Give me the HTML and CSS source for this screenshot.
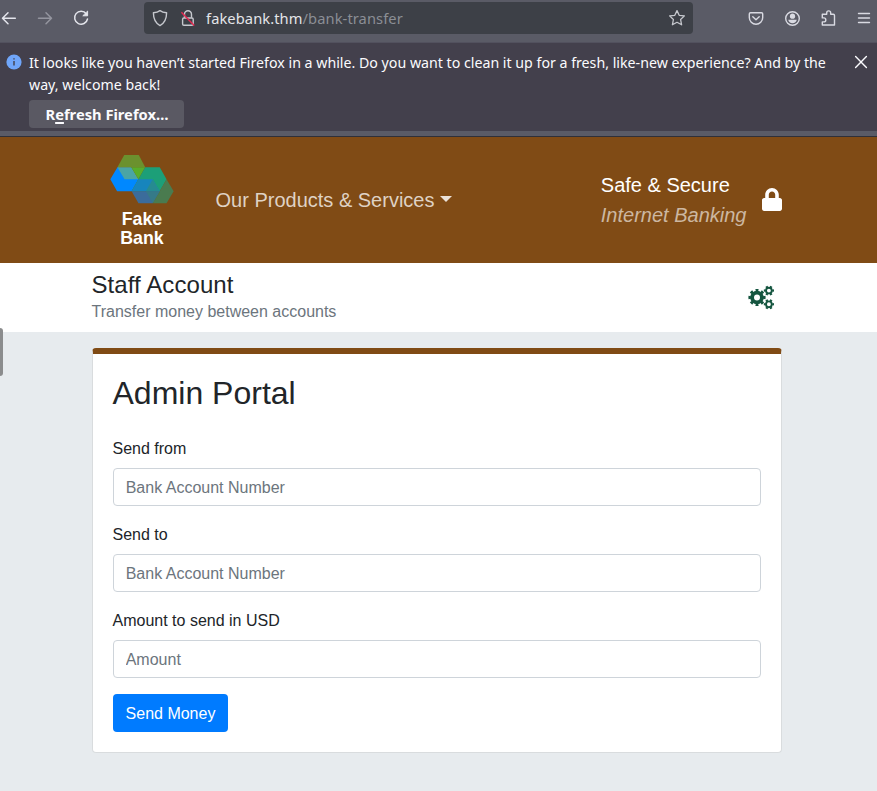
FILE: index.html
```html
<!DOCTYPE html>
<html lang="en">
<head>
<meta charset="utf-8">
<title>Fake Bank</title>
<link rel="stylesheet" href="styles.css">
</head>
<body>
<div class="toolbar">
  <svg class="nav-icons" width="94" height="36" fill="none" stroke="#e4e5ec" stroke-width="1.5" stroke-linecap="round" stroke-linejoin="round">
    <path d="M15.3 18.3H2.7M8 12.8L2.5 18.3L8 23.8"/>
    <path stroke="#94959f" d="M38.5 18.3H51M46 12.8L51.5 18.3L46 23.8"/>
    <path d="M86.3 13.8A6.5 6.5 0 1 0 87.5 19"/><path fill="#e4e5ec" stroke-width="1" d="M87.6 11.5V15.8H83.2Z"/>
  </svg>
  <div class="urlbar">
    <svg class="site-icons" width="54" height="32" fill="none" stroke="#c6c8ce" stroke-width="1.4" stroke-linejoin="round">
      <path d="M16 8.6C18 10.1 20.2 10.6 22.6 10.8C22.6 16.5 21.2 20.8 16 23.6C10.8 20.8 9.4 16.5 9.4 10.8C11.8 10.6 14 10.1 16 8.6Z"/>
      <rect x="38.6" y="16" width="10.6" height="7.2" rx="1.3"/><path d="M40.5 15.8V12.2A3.5 3.5 0 0 1 47.5 12.2V15.8"/>
      <path stroke="#e22850" stroke-width="1.5" d="M37.4 10.2L50.2 23.5"/>
    </svg>
    <div class="url">fakebank.thm<span>/bank-transfer</span></div>
    <svg class="star" width="18" height="18" viewBox="0 0 18 18" fill="none" stroke="#c6c8ce" stroke-width="1.3" stroke-linejoin="round"><path d="M9 1.6L11.2 6.3L16.4 6.9L12.6 10.5L13.6 15.8L9 13.3L4.4 15.8L5.4 10.5L1.6 6.9L6.8 6.3Z"/></svg>
  </div>
  <svg class="tools" width="184" height="36" fill="none" stroke="#d9dae2" stroke-width="1.4" stroke-linecap="round" stroke-linejoin="round">
    <path d="M57.5 12.8H68.5Q69.7 12.8 69.7 14V17.5A6.7 6.7 0 0 1 56.3 17.5V14Q56.3 12.8 57.5 12.8ZM59.8 16.7L63 19.7L66.2 16.7"/>
    <circle cx="99.5" cy="18.5" r="6.8"/><g fill="#d9dae2" stroke="none"><circle cx="99.5" cy="16.2" r="2.6"/><path d="M95.2 19.8H103.8Q103 23.2 99.5 23.2T95.2 19.8Z"/></g>
    <path d="M129.3 14.3H133.7V12.9A2 2 0 0 1 137.7 12.9V14.3H140.3Q141.5 14.3 141.5 15.5V25H129.3V21.9H130.8A2 2 0 0 0 130.8 17.9H129.3Z"/>
    <path d="M165.5 13.5H176.5M165.5 18H176.5M165.5 22.5H176.5"/>
  </svg>
</div>
<div class="notice">
  <svg class="info" width="16" height="16"><circle cx="8" cy="8" r="7.6" fill="#70a6fa"/><path d="M8 7V11.5M8 4.3V5.5" stroke="#42404c" stroke-width="1.4"/></svg>
  <div class="message">
    <p class="line-one">It looks like you haven’t started Firefox in a while. Do you want to clean it up for a fresh, like-new experience? And by the</p>
    <p class="line-two">way, welcome back!</p>
    <button class="refresh">R<u>e</u>fresh Firefox…</button>
  </div>
  <svg class="close" width="14" height="14" stroke="#fbfbfe" stroke-width="1.4" stroke-linecap="round"><path d="M1.6 1.6L12.4 12.4M12.4 1.6L1.6 12.4"/></svg>
</div>
<header class="bank-header">
  <div class="brand">
    <svg width="65" height="50" viewBox="0 0 192 150" preserveAspectRatio="none">
      <path fill="#6b912e" d="M42 3H85L104 40H22Z"/>
      <path fill="#0088ff" d="M22 40L1 76L21 112H64L84 76Z"/>
      <path fill="#4aa5a5" d="M22 40H63L84 76H43Z"/>
      <path fill="#58ae2b" d="M63 40H104L84 76Z"/>
      <path fill="#1c9f78" d="M104 40H147L167 76L147 112H64L84 76Z"/>
      <path fill="#3b6c9b" d="M64 112H147L126 148H84Z"/>
      <path fill="#1785bd" d="M84 76H126L147 112H64Z"/>
      <path fill="#4a7b4f" d="M147 112L167 76L188 112L167 148H126Z"/>
      <path fill="#268b91" d="M126 76L147 112H106Z"/>
      <path fill="#357a88" d="M106 112H147L126 148Z"/>
    </svg>
    <div>Fake<br>Bank</div>
  </div>
  <div class="products">Our Products &amp; Services<i></i></div>
  <div class="secure">Safe &amp; Secure<br><em>Internet Banking</em></div>
  <svg class="lock" viewBox="0 0 448 512" width="20" height="23" preserveAspectRatio="none"><path fill="#fff" d="M400 224h-24v-72C376 68.2 307.8 0 224 0S72 68.2 72 152v72H48c-26.5 0-48 21.5-48 48v192c0 26.5 21.5 48 48 48h352c26.5 0 48-21.5 48-48V272c0-26.5-21.5-48-48-48zm-104 0H152v-72c0-39.7 32.3-72 72-72s72 32.3 72 72v72z"/></svg>
</header>
<section class="account">
  <div><h2>Staff Account</h2><p>Transfer money between accounts</p></div>
  <svg class="cogs" width="27" height="25" fill="none" stroke="#14553f">
    <circle cx="9" cy="12.5" r="4.9" stroke-width="3.8"/><circle cx="9" cy="12.5" r="7.3" stroke-width="2.6" pathLength="16" stroke-dasharray="1 1" stroke-dashoffset=".5"/>
    <circle cx="20.9" cy="5.6" r="2.9" stroke-width="1.9"/><circle cx="20.9" cy="5.6" r="4.2" stroke-width="1.8" pathLength="12" stroke-dasharray="1 1" stroke-dashoffset=".5"/>
    <circle cx="20.9" cy="19.3" r="2.9" stroke-width="1.9"/><circle cx="20.9" cy="19.3" r="4.2" stroke-width="1.8" pathLength="12" stroke-dasharray="1 1" stroke-dashoffset=".5"/>
  </svg>
</section>
<main>
  <form class="card">
    <h1>Admin Portal</h1>
    <label for="from">Send from</label><input id="from" placeholder="Bank Account Number">
    <label for="to">Send to</label><input id="to" placeholder="Bank Account Number">
    <label for="amount">Amount to send in USD</label><input id="amount" placeholder="Amount">
    <button class="send" type="button">Send Money</button>
  </form>
</main>
<div class="handle"></div>
</body>
</html>
```
FILE: styles.css
```css
* { box-sizing: border-box; }
body { margin: 0; height: 791px; overflow: hidden; background: #e7ebee; color: #212529; font: 16px/24px "Liberation Sans", Arial, sans-serif; }
svg { display: block; flex: none; }
h1, h2, p { margin: 0; font-weight: 400; }
.toolbar { height: 43px; display: flex; align-items: flex-start; background: #5a5b66; border-bottom: 1px solid #52515e; }
.urlbar { width: 549px; height: 32px; margin: 2px 0 0 50px; display: flex; align-items: center; border-radius: 4px; background: #3d4047; }
.url { flex: 1; padding-left: 8px; font: 14.67px/32px "Noto Sans", sans-serif; letter-spacing: .09px; color: #e4e5e9; white-space: nowrap; }
.url span { color: #8b8e95; }
.star { margin-right: 7px; }
.notice { height: 94px; display: flex; align-items: flex-start; padding-left: 6px; background: #43404c; border-bottom: 1px solid #2f3039; box-shadow: inset 0 -5px #5a5b66; color: #fbfbfe; }
.info { margin-top: 11px; }
.message { width: 810px; padding: 9px 0 0 7px; font: 14.2px/22px "Noto Sans", sans-serif; white-space: nowrap; }
.refresh { display: block; width: 155px; height: 28px; margin-top: 4px; padding: 1px 0 0 1px; border: 0; border-radius: 4px; background: #5a5963; color: #fbfbfe; font: bold 14.7px/27px "Noto Sans", sans-serif; }
.refresh u { text-underline-offset: 2px; text-decoration-thickness: 2px; text-decoration-skip-ink: none; }
.close { margin: 12px 0 0 22px; }
.bank-header { height: 126px; display: flex; align-items: flex-start; padding-left: 92px; background: #804b15; color: #fff; font-size: 20px; line-height: 30px; }
.brand { width: 100px; padding: 17px 0 0 18px; font-weight: bold; font-size: 17.8px; line-height: 19px; text-align: center; }
.brand div { width: 64px; margin-top: 6px; }
.products { width: 385px; padding: 48px 0 0 23.5px; color: #dfd2c4; white-space: nowrap; }
.products i { display: inline-block; margin-left: 6px; vertical-align: 5px; border: 6px solid transparent; border-top-color: #ebe2d9; border-bottom: 0; }
.secure { width: 185px; padding: 33px 0 0 23.8px; white-space: nowrap; }
.secure em { color: #ccb7a1; }
.lock { margin-top: 51px; }
.account { height: 69px; display: flex; justify-content: space-between; padding: 7px 102.5px 0 91.5px; background: #fff; }
.account h2 { font-size: 24px; line-height: 29px; letter-spacing: .08px; }
.account p { padding-top: 1px; color: #6c757d; line-height: 24px; }
.cogs { margin-top: 15px; }
main { padding: 16px 95px 0 92px; }
.card { height: 405px; padding: 20px; border: 1px solid #d9dcde; border-top: 6px solid #804b15; border-radius: 4px; background: #fff; }
.card h1 { margin-bottom: 24px; font-size: 32px; line-height: 38px; text-indent: -.5px; }
label { display: block; height: 24px; margin-bottom: 8px; padding-top: 1px; text-indent: -.5px; }
input { display: block; width: 648px; height: 38px; margin-bottom: 16px; padding: 2px 12px 0 11.7px; border: 1px solid #ced4da; border-radius: 4px; font: inherit; }
input::placeholder { color: #6c757d; opacity: 1; }
.send { width: 115px; height: 38px; padding: 2px 0 0; border: 0; border-radius: 4px; background: #007bff; color: #fff; font: inherit; }
.handle { position: absolute; left: 0; top: 328px; width: 3px; height: 48px; border-radius: 0 3px 3px 0; background: #8b8c8d; }
```
